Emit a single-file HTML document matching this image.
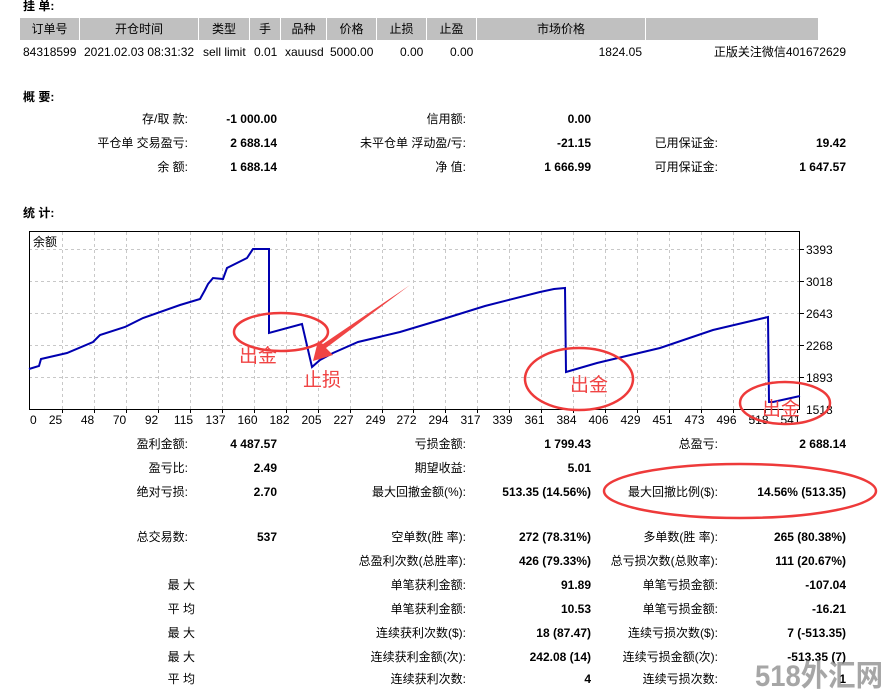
<!DOCTYPE html>
<html><head><meta charset="utf-8"><style>
body{margin:0;width:890px;height:692px;background:#fff;position:relative;overflow:hidden;font-family:"Liberation Sans","Noto Sans CJK SC",sans-serif;font-size:12px;color:#000}
.a{position:absolute;white-space:nowrap;line-height:14px}
.r{text-align:right}
.b{font-weight:bold}
.h{position:absolute;top:18px;height:22px;background:#c0c0c0;line-height:22px;text-align:center;font-size:12px}
</style></head><body>
<div class="a b" style="left:23px;top:-1px">挂 单:</div>
<div class="h" style="left:20px;width:59px">订单号</div>
<div class="h" style="left:80px;width:118px">开仓时间</div>
<div class="h" style="left:199px;width:50px">类型</div>
<div class="h" style="left:250px;width:30px">手</div>
<div class="h" style="left:281px;width:45px">品种</div>
<div class="h" style="left:327px;width:49px">价格</div>
<div class="h" style="left:377px;width:49px">止损</div>
<div class="h" style="left:427px;width:49px">止盈</div>
<div class="h" style="left:477px;width:168px">市场价格</div>
<div class="h" style="left:646px;width:172px"></div>
<div class="a" style="left:23px;top:45px">84318599</div>
<div class="a" style="left:84px;top:45px">2021.02.03 08:31:32</div>
<div class="a" style="left:203px;top:45px">sell limit</div>
<div class="a" style="left:254px;top:45px">0.01</div>
<div class="a" style="left:285px;top:45px">xauusd</div>
<div class="a" style="left:330px;top:45px">5000.00</div>
<div class="a" style="left:400px;top:45px">0.00</div>
<div class="a" style="left:450px;top:45px">0.00</div>
<div class="a" style="left:560px;top:45px;width:82px;text-align:right">1824.05</div>
<div class="a" style="left:680px;top:45px;width:166px;text-align:right">正版关注微信401672629</div>

<div class="a b" style="left:23px;top:90px">概 要:</div>
<div class="a b" style="left:23px;top:206px">统 计:</div>

<script>
function L(x,y,t,bold,w){var d=document.createElement('div');d.className='a r'+(bold?' b':'');d.style.left=(x-(w||200))+'px';d.style.width=(w||200)+'px';d.style.top=(y-7)+'px';d.textContent=t;document.body.appendChild(d);}
var S=[
[119,'存/取 款:','-1 000.00','信用额:','0.00','',''],
[143,'平仓单 交易盈亏:','2 688.14','未平仓单 浮动盈/亏:','-21.15','已用保证金:','19.42'],
[167,'余 额:','1 688.14','净 值:','1 666.99','可用保证金:','1 647.57'],
[444,'盈利金额:','4 487.57','亏损金额:','1 799.43','总盈亏:','2 688.14'],
[468,'盈亏比:','2.49','期望收益:','5.01','',''],
[492,'绝对亏损:','2.70','最大回撤金额(%):','513.35 (14.56%)','最大回撤比例($):','14.56% (513.35)'],
[537,'总交易数:','537','空单数(胜 率):','272 (78.31%)','多单数(胜 率):','265 (80.38%)'],
[561,'','','总盈利次数(总胜率):','426 (79.33%)','总亏损次数(总败率):','111 (20.67%)'],
[585,'最 大','','单笔获利金额:','91.89','单笔亏损金额:','-107.04'],
[609,'平 均','','单笔获利金额:','10.53','单笔亏损金额:','-16.21'],
[633,'最 大','','连续获利次数($):','18 (87.47)','连续亏损次数($):','7 (-513.35)'],
[657,'最 大','','连续获利金额(次):','242.08 (14)','连续亏损金额(次):','-513.35 (7)'],
[679,'平 均','','连续获利次数:','4','连续亏损次数:','1']];
S.forEach(function(s){var y=s[0];var stat=y>400&&/^(最|平)/.test(s[1]);
L(stat?195:188,y,s[1]);L(277,y,s[2],1);L(466,y,s[3]);L(591,y,s[4],1);L(718,y,s[5]);L(846,y,s[6],1);});
</script>

<svg width="890" height="692" style="position:absolute;left:0;top:0" xmlns="http://www.w3.org/2000/svg">
<g stroke="#c8c8c8" stroke-dasharray="3,3" stroke-width="1">
<line x1="29" x2="800" y1="249.5" y2="249.5"/><line x1="29" x2="800" y1="281.5" y2="281.5"/><line x1="29" x2="800" y1="313.5" y2="313.5"/><line x1="29" x2="800" y1="345.5" y2="345.5"/><line x1="29" x2="800" y1="377.5" y2="377.5"/>
<g id="vg"></g>
</g>
<rect x="29.5" y="231.5" width="770" height="178" fill="none" stroke="#000"/>
<g stroke="#000" id="tk"><line x1="800" x2="804" y1="249.5" y2="249.5"/><line x1="800" x2="804" y1="281.5" y2="281.5"/><line x1="800" x2="804" y1="313.5" y2="313.5"/><line x1="800" x2="804" y1="345.5" y2="345.5"/><line x1="800" x2="804" y1="377.5" y2="377.5"/></g>
<text x="33" y="246" font-size="12" font-family="Liberation Sans,Noto Sans CJK SC,sans-serif">余额</text>
<g font-size="12" font-family="Liberation Sans,sans-serif">
<text x="806" y="254">3393</text><text x="806" y="286">3018</text><text x="806" y="318">2643</text><text x="806" y="350">2268</text><text x="806" y="382">1893</text><text x="806" y="414">1518</text>
<g id="xl"></g></g>
<polyline fill="none" stroke="#0000b0" stroke-width="2" points="29,369 39,366 41,359 67,353 93,342 100,335 125,327 143,318 180,305 200,299 205,290 208,284 213,278 223,279 227,268 247,258 253,249 269,249 269,333 302,324 312,367 320,360 333,353 358,342 400,332 440,320 485,306 540,292 554,289 565,288 566,372 597,363 660,348 713,330 768,317 769,402 773,402 800,396"/>
<g fill="none" stroke="#ee3a3a" stroke-width="2.5">
<ellipse cx="281" cy="332" rx="47" ry="19"/>
<ellipse cx="579" cy="379" rx="54" ry="31"/>
<ellipse cx="785" cy="403" rx="45" ry="21"/>
<ellipse cx="740" cy="491" rx="136" ry="27"/>
</g>
<polygon fill="#f04444" points="410,285 326,348 333,355 313,361 318,341 323,344"/>
<g fill="#f04444" font-size="19" font-family="Noto Sans CJK SC,sans-serif">
<text x="239" y="362">出金</text><text x="303" y="386">止损</text><text x="570" y="391">出金</text><text x="762" y="415">出金</text></g>
<text x="755" y="686" font-size="30" font-weight="bold" fill="#888" fill-opacity="0.75" textLength="128" lengthAdjust="spacingAndGlyphs" font-family="Liberation Sans,Noto Sans CJK SC,sans-serif">518外汇网</text>
</svg>
<script>
var vg=document.getElementById('vg'),xl=document.getElementById('xl'),tkg=document.getElementById('tk'),ns='http://www.w3.org/2000/svg';
var labs=['25','48','70','92','115','137','160','182','205','227','249','272','294','317','339','361','384','406','429','451','473','496','518','541'];
var t=document.createElementNS(ns,'text');t.setAttribute('x',30);t.setAttribute('y',424);t.textContent='0';xl.appendChild(t);
for(var i=0;i<24;i++){var x=Math.round(62+i*31.95)+.5;
if(i<23){var l=document.createElementNS(ns,'line');l.setAttribute('x1',x);l.setAttribute('x2',x);l.setAttribute('y1',232);l.setAttribute('y2',409);vg.appendChild(l);}
var tk=document.createElementNS(ns,'line');tk.setAttribute('x1',x);tk.setAttribute('x2',x);tk.setAttribute('y1',409);tk.setAttribute('y2',413);tkg.appendChild(tk);
var t=document.createElementNS(ns,'text');t.setAttribute('x',x-7);t.setAttribute('y',424);t.setAttribute('text-anchor','middle');t.textContent=labs[i];xl.appendChild(t);}
</script>
</body></html>
